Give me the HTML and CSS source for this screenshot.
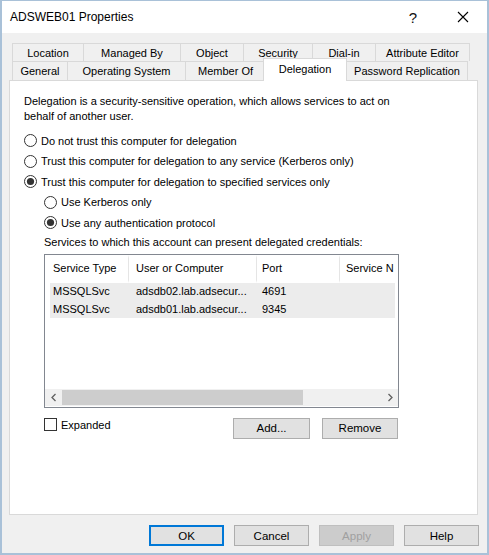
FILE: index.html
```html
<!DOCTYPE html>
<html>
<head>
<meta charset="utf-8">
<link rel="stylesheet" href="styles.css">
</head>
<body>
<div class="window">
  <div class="titlebar">
    <div class="title">ADSWEB01 Properties</div>
    <div class="help-q">?</div>
    <div class="close-x">
      <svg width="12" height="12" viewBox="0 0 12 12"><path d="M1 1 L11 11 M11 1 L1 11" stroke="#000" stroke-width="1.1" fill="none"/></svg>
    </div>
  </div>
  <div class="body">
    <div class="tabs">
      <div class="tabrow row1">
        <div class="tab w71">Location</div>
        <div class="tab w97">Managed By</div>
        <div class="tab w63">Object</div>
        <div class="tab w69">Security</div>
        <div class="tab w63">Dial-in</div>
        <div class="tab w95">Attribute Editor</div>
      </div>
      <div class="tabrow row2">
        <div class="tab w55">General</div>
        <div class="tab w118">Operating System</div>
        <div class="tab w80">Member Of</div>
        <div class="tab active">Delegation</div>
        <div class="tab w121">Password Replication</div>
      </div>
    </div>
    <div class="panel">
      <p class="desc">Delegation is a security-sensitive operation, which allows services to act on<br>behalf of another user.</p>
      <div class="radio first"><svg class="rb" width="13" height="13" viewBox="0 0 13 13"><circle cx="6.5" cy="6.5" r="6" fill="#fff" stroke="#333"/></svg><span>Do not trust this computer for delegation</span></div>
      <div class="radio"><svg class="rb" width="13" height="13" viewBox="0 0 13 13"><circle cx="6.5" cy="6.5" r="6" fill="#fff" stroke="#333"/></svg><span>Trust this computer for delegation to any service (Kerberos only)</span></div>
      <div class="radio"><svg class="rb" width="13" height="13" viewBox="0 0 13 13"><circle cx="6.5" cy="6.5" r="6" fill="#fff" stroke="#333"/><circle cx="6.5" cy="6.5" r="3.6" fill="#333"/></svg><span>Trust this computer for delegation to specified services only</span></div>
      <div class="radio sub"><svg class="rb" width="13" height="13" viewBox="0 0 13 13"><circle cx="6.5" cy="6.5" r="6" fill="#fff" stroke="#333"/></svg><span>Use Kerberos only</span></div>
      <div class="radio sub"><svg class="rb" width="13" height="13" viewBox="0 0 13 13"><circle cx="6.5" cy="6.5" r="6" fill="#fff" stroke="#333"/><circle cx="6.5" cy="6.5" r="3.6" fill="#333"/></svg><span>Use any authentication protocol</span></div>
      <div class="sublabel">Services to which this account can present delegated credentials:</div>
      <div class="listview">
        <div class="lv-head">
          <div class="col c1">Service Type</div>
          <div class="col c2">User or Computer</div>
          <div class="col c3">Port</div>
          <div class="col c4">Service N</div>
        </div>
        <div class="lv-body">
          <div class="lv-row">
            <div class="cell c1">MSSQLSvc</div>
            <div class="cell c2">adsdb02.lab.adsecur...</div>
            <div class="cell c3">4691</div>
            <div class="cell c4"></div>
          </div>
          <div class="lv-row">
            <div class="cell c1">MSSQLSvc</div>
            <div class="cell c2">adsdb01.lab.adsecur...</div>
            <div class="cell c3">9345</div>
            <div class="cell c4"></div>
          </div>
        </div>
        <div class="hscroll">
          <div class="arrow"><svg width="8" height="9" viewBox="0 0 8 9"><path d="M5.5 1 L2 4.5 L5.5 8" stroke="#606060" stroke-width="1.3" fill="none"/></svg></div>
          <div class="track"><div class="thumb"></div></div>
          <div class="arrow"><svg width="8" height="9" viewBox="0 0 8 9"><path d="M2.5 1 L6 4.5 L2.5 8" stroke="#606060" stroke-width="1.3" fill="none"/></svg></div>
        </div>
      </div>
      <div class="actions">
        <div class="check"><span class="box"></span><span>Expanded</span></div>
        <div class="spacer"></div>
        <div class="btn w77">Add...</div>
        <div class="btn w76">Remove</div>
      </div>
    </div>
    <div class="footer">
      <div class="btn fbtn default">OK</div>
      <div class="btn fbtn">Cancel</div>
      <div class="btn fbtn disabled">Apply</div>
      <div class="btn fbtn">Help</div>
    </div>
  </div>
</div>
</body>
</html>
```

FILE: styles.css
```css
* { box-sizing: border-box; }
html, body { margin: 0; padding: 0; background: #fff; }
body {
  font-family: "Liberation Sans", Arial, sans-serif;
  font-size: 11px;
  color: #000;
}
.window {
  width: 489px;
  height: 555px;
  background: #f0f0f0;
  border: 2px solid #a9c1d8;
  border-top: 1px solid #a9c1d8;
  display: flex;
  flex-direction: column;
}
.titlebar {
  height: 32px;
  background: #fff;
  display: flex;
  align-items: center;
  padding-left: 8px;
}
.title { font-size: 12px; flex: 1; }
.help-q { font-size: 15px; width: 20px; text-align: center; margin-right: 34px; color: #111; }
.close-x { width: 12px; height: 12px; margin-right: 18px; display: flex; }
.body {
  flex: 1;
  display: flex;
  flex-direction: column;
  padding: 10px 9px 7px 7px;
}
.tabs { height: 37px; margin-left: 3px; display: flex; flex-direction: column; position: relative; z-index: 2; }
.tabrow { display: flex; }
.row1 { height: 18px; }
.row2 { height: 19px; align-items: flex-end; }
.tab {
  height: 100%;
  border: 1px solid #d9d9d9;
  border-right: none;
  border-bottom: none;
  display: flex;
  align-items: center;
  justify-content: center;
  white-space: nowrap;
  background: #f0f0f0;
}
.tabrow .tab:last-child { border-right: 1px solid #d9d9d9; }
.tab.active {
  width: 84px;
  height: 23px;
  margin-left: -2px;
  margin-bottom: -1px;
  background: #fff;
  border-right: 1px solid #d9d9d9;
  padding-bottom: 3px;
}
.tab.active + .tab { border-left: none; }
.w55 { width: 55px; } .w63 { width: 63px; } .w69 { width: 69px; } .w71 { width: 71px; }
.w80 { width: 80px; } .w95 { width: 95px; } .w97 { width: 97px; } .w118 { width: 118px; }
.w121 { width: 121px; } .w76 { width: 76px; } .w77 { width: 77px; }
.panel {
  height: 435px;
  background: #fff;
  border: 1px solid #d9d9d9;
  padding: 13px 14px 0 14px;
}
.desc { margin: 0; line-height: 15px; }
.radio { height: 20.5px; display: flex; align-items: center; }
.radio.first { margin-top: 6.5px; }
.radio .rb { margin-right: 4px; flex: none; }
.radio.sub { margin-left: 20px; }
.sublabel { margin: 2px 0 0 20px; line-height: 15px; }
.listview {
  margin: 3.5px 0 0 20px;
  width: 355px;
  height: 154px;
  border: 1px solid #828790;
  display: flex;
  flex-direction: column;
  overflow: hidden;
}
.lv-head { height: 28px; display: flex; flex: none; }
.col {
  height: 100%;
  display: flex;
  align-items: center;
  border-right: 1px solid #e5e5e5;
  white-space: nowrap;
  overflow: hidden;
  padding-bottom: 1px;
}
.lv-head .col { border-top: 3px solid #fff; border-bottom: 3px solid #fff; }
.c1 { width: 84px; padding-left: 8px; }
.c2 { width: 128px; padding-left: 7px; }
.c3 { width: 83px; padding-left: 5px; }
.c4 { width: 58px; padding-left: 6px; border-right: none; }
.lv-body { flex: 1; padding-left: 5px; }
.lv-row { display: flex; height: 17.5px; background: #ececec; width: 345px; }
.cell { display: flex; align-items: center; white-space: nowrap; overflow: hidden; }
.lv-row .c1 { width: 79px; padding-left: 3px; }
.lv-row .c2 { width: 128px; padding-left: 7px; }
.lv-row .c3 { width: 83px; padding-left: 5px; }
.lv-row .c4 { width: 55px; }
.hscroll { height: 17px; display: flex; background: #f0f0f0; flex: none; margin-bottom: 1px; }
.arrow { width: 17px; display: flex; align-items: center; justify-content: center; flex: none; }
.track { flex: 1; padding: 1px 0; }
.thumb { width: 241px; height: 100%; background: #cdcdcd; }
.actions { display: flex; align-items: flex-start; margin: 10px 0 0 20px; width: 355px; }
.check { display: flex; align-items: center; height: 14px; }
.check .box { width: 13px; height: 13px; border: 1px solid #333; background: #fff; margin-right: 4px; }
.spacer { flex: 1; }
.btn {
  height: 21px;
  background: #e1e1e1;
  border: 1px solid #adadad;
  display: flex;
  align-items: center;
  justify-content: center;
  font-size: 11.5px;
}
.actions .btn + .btn { margin-left: 11px; }
.actions .btn { margin-right: 1px; }
.footer { display: flex; justify-content: flex-end; gap: 10px; padding-top: 10px; margin-right: -1px; }
.fbtn { width: 75px; }
.fbtn.default { border: 2px solid #0078d7; }
.fbtn.disabled { color: #a0a0a0; background: #cccccc; border-color: #bfbfbf; }
```
